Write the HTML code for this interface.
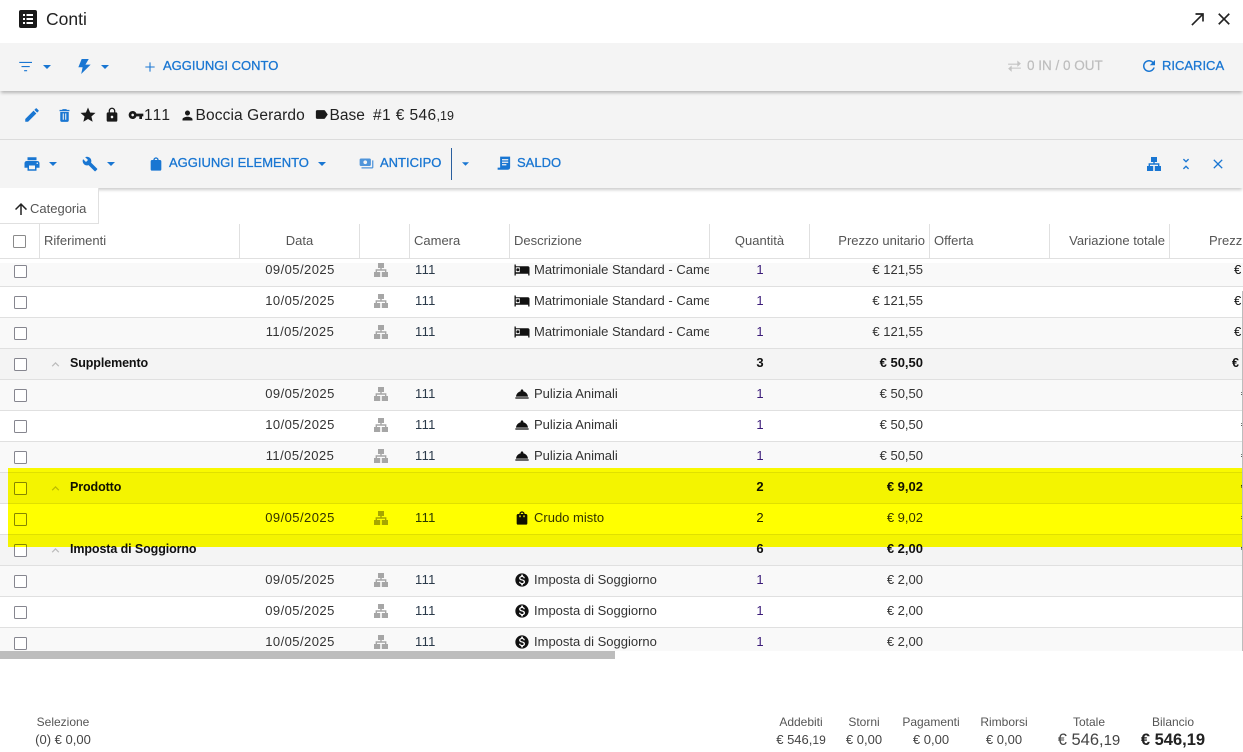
<!DOCTYPE html>
<html lang="it"><head><meta charset="utf-8"><title>Conti</title>
<style>
html,body{margin:0;padding:0;width:1243px;height:752px;overflow:hidden;background:#fff}
body{position:relative;font-family:"Liberation Sans",sans-serif;font-size:13px;color:#333}
.a,.r>*,.h{position:absolute;white-space:nowrap}
svg.i{position:absolute;fill:currentColor}
.bar{position:absolute;left:0;width:1243px;background:#f4f4f4}
.b{color:#1976d2;font-size:13px;-webkit-text-stroke:.3px #1976d2;line-height:16px;top:0}
.h{top:233px;line-height:16px;color:#555;font-size:13px}
.vl{position:absolute;top:224px;height:34px;width:1px;background:#e0e0e0}
#rows{position:absolute;left:0;top:259px;width:1243px;height:392px;overflow:hidden}
.r{position:absolute;left:0;width:1243px;height:30px;border-bottom:1px solid #e0e0e0;line-height:28px;background:#fff}
.o{background:#f9f9f9}
.g{background:#f4f4f4;font-weight:bold;color:#111;font-size:12.5px}
.c{left:14px;top:9px;width:13px;height:13px;box-sizing:border-box;border:1.5px solid #86868f;border-radius:1.5px;background:#fff}
.d{left:240px;width:120px;text-align:center;letter-spacing:.45px}
.m{left:374px;top:7px;width:14px;height:14px;color:#a6a6a6}
.n{left:415px;color:#2b3a4a;letter-spacing:.3px}
.ic{left:514px;top:6px;width:16px;height:16px;color:#111}
.t{left:534px;width:175px;overflow:hidden}
.q{left:710px;width:100px;text-align:center;color:#3a1a78}
.g .q{color:#111;font-size:13px}
.p{left:810px;width:113px;text-align:right}
.g .p{font-size:13px}
.e{left:1234px;color:#111}
.x{left:48px;top:8px;width:15px;height:15px;color:#bbb}
.l{left:70px;letter-spacing:-.1px}
.f{position:absolute;text-align:center;width:100px;color:#555;font-size:12px;line-height:14px}
.f b{display:block;font-weight:normal;font-size:13px;line-height:18px;margin-top:2px;color:#444}
.f small{font-size:12px}
</style></head><body>
<svg width="0" height="0" style="position:absolute"><defs>
<symbol id="sm" viewBox="0 0 14 14"><path d="M4 0h6v5H7.700v1.300h4.700V9H14v5H7.800V9h3.200V7.700H3V9h3.200v5H0V9h1.600V6.300h4.700V5H4z"/></symbol>
<symbol id="bed" viewBox="0 0 16 16"><path fill-rule="evenodd" d="M.5 2.500h1.300v1.800H14c.8 0 1.500.7 1.500 1.500v7.700h-1.300v-1.700H1.800v1.700H.5zM1.800 5.300v4.900h4V5.300zM3.800 6.200a1.500 1.500 0 1 1 0 3 1.500 1.500 0 0 1 0-3z"/></symbol>
<symbol id="rs" viewBox="0 0 24 24"><path d="M2 17h20v2H2zm11.840-9.210c.1-.24.16-.51.16-.79 0-1.100-.9-2-2-2s-2 .9-2 2c0 .28.06.55.16.79C6.250 8.600 3.270 11.930 3 16h18c-.27-4.070-3.250-7.400-7.160-8.210z"/></symbol>
<symbol id="bag" viewBox="0 0 24 24"><path d="M18 6h-2c0-2.210-1.790-4-4-4S8 3.790 8 6H6c-1.100 0-2 .9-2 2v12c0 1.100.9 2 2 2h12c1.100 0 2-.9 2-2V8c0-1.100-.9-2-2-2zm-8 4c0 .55-.45 1-1 1s-1-.45-1-1V8h2v2zm2-6c1.100 0 2 .9 2 2h-4c0-1.100.9-2 2-2zm4 6c0 .55-.45 1-1 1s-1-.45-1-1V8h2v2z"/></symbol>
<symbol id="pd" viewBox="0 0 24 24"><path d="M12 2C6.480 2 2 6.480 2 12s4.480 10 10 10 10-4.480 10-10S17.520 2 12 2zm1.410 16.090V20h-2.670v-1.930c-1.710-.36-3.160-1.460-3.270-3.400h1.960c.1 1.050.82 1.870 2.650 1.870 1.960 0 2.400-.98 2.400-1.590 0-.83-.44-1.610-2.670-2.140-2.480-.6-4.180-1.620-4.180-3.670 0-1.720 1.390-2.840 3.110-3.210V4h2.670v1.950c1.860.45 2.790 1.860 2.850 3.390H14.300c-.05-1.110-.64-1.870-2.220-1.870-1.500 0-2.400.68-2.400 1.640 0 .84.65 1.390 2.670 1.910s4.180 1.390 4.180 3.910c-.01 1.830-1.380 2.830-3.120 3.160z"/></symbol>
<symbol id="up" viewBox="0 0 24 24"><path d="M12 8l-6 6 1.410 1.410L12 10.830l4.590 4.580L18 14z"/></symbol>
<symbol id="dn" viewBox="0 0 10 5"><path d="M0 0h10L5 5z"/></symbol>
<symbol id="cl" viewBox="0 0 24 24"><path d="M19 6.410L17.590 5 12 10.590 6.410 5 5 6.410 10.590 12 5 17.590 6.410 19 12 13.410 17.590 19 19 17.590 13.410 12z"/></symbol>
</defs></svg>

<svg class="i" style="left:18px;top:9px;width:20px;height:20px;color:#1a1a1a" viewBox="0 0 20 20"><path fill-rule="evenodd" d="M3 1h14a2 2 0 0 1 2 2v14a2 2 0 0 1-2 2H3a2 2 0 0 1-2-2V3a2 2 0 0 1 2-2zM5 5v2h2V5zM8.500 5v2H15V5zM5 9v2h2V9zM8.500 9v2H15V9zM5 13v2h2v-2zM8.500 13v2H15v-2z"/></svg>
<div class="a" style="left:46px;top:8px;font-size:17.5px;line-height:22px;color:#222">Conti</div>
<svg class="i" style="left:1188px;top:9px;width:20px;height:20px;color:#222" viewBox="0 0 24 24"><path d="M9 5v2h6.590L4 18.590 5.410 20 17 8.410V15h2V5z"/></svg>
<svg class="i" style="left:1214px;top:9px;width:20px;height:20px;color:#222"><use href="#cl"/></svg>

<div class="bar" style="top:43px;height:48px;box-shadow:0 3px 3px -1px rgba(0,0,0,.25);z-index:3"></div>
<div style="position:absolute;left:0;top:0;width:1243px;height:190px;z-index:4;color:#1976d2">
<svg class="i" style="left:17px;top:57px;width:18px;height:18px" viewBox="0 0 24 24"><path d="M3 6.500V8h17V6.500zM6 12v1.500h11V12zM9.500 17.500V19h4v-1.500z"/></svg>
<svg class="i" style="left:43px;top:65px;width:8px;height:4px"><use href="#dn"/></svg>
<svg class="i" style="left:76px;top:59px;width:17px;height:15px" viewBox="3 2 18 20" preserveAspectRatio="none"><path d="M9 2L5.500 13H10l-1.500 9L18.500 9.500H13L16.500 2z"/></svg>
<svg class="i" style="left:101px;top:65px;width:8px;height:4px"><use href="#dn"/></svg>
<svg class="i" style="left:142px;top:59px;width:16px;height:16px" viewBox="0 0 24 24"><path d="M19 12.800h-6.200V19h-1.600v-6.200H5v-1.600h6.200V5h1.600v6.200H19z"/></svg>
<div class="a b" style="left:163px;top:58px">AGGIUNGI CONTO</div>
<svg class="i" style="left:1006px;top:58px;width:17px;height:17px;color:#c4c4c4" viewBox="0 0 24 24"><path d="M16 4l5 4.500-5 4.500v-3H3V8.500h13V4zM8 11v3h13v1.500H8V20l-5-4.500L8 11z" transform="translate(0 -.5)"/></svg>
<div class="a" style="left:1027px;top:58px;color:#bdbdbd;font-size:13.5px;line-height:16px;-webkit-text-stroke:.2px #bdbdbd">0 IN / 0 OUT</div>
<svg class="i" style="left:1140px;top:57px;width:18px;height:18px" viewBox="0 0 24 24"><path d="M17.650 6.350C16.200 4.900 14.210 4 12 4c-4.420 0-7.990 3.580-7.990 8s3.570 8 7.990 8c3.730 0 6.840-2.550 7.730-6h-2.080c-.82 2.330-3.040 4-5.650 4-3.310 0-6-2.690-6-6s2.690-6 6-6c1.660 0 3.140.69 4.220 1.780L13 11h7V4l-2.350 2.350z"/></svg>
<div class="a b" style="left:1162px;top:58px">RICARICA</div>
</div>

<div class="bar" style="top:91px;height:48px"></div>
<div class="bar" style="top:139px;height:49px;border-top:1px solid #dcdcdc;box-sizing:border-box;box-shadow:0 3px 3px -1px rgba(0,0,0,.2)"></div>

<svg class="i" style="left:23px;top:106px;width:18px;height:18px;color:#1976d2" viewBox="0 0 24 24"><path d="M3 17.250V21h3.750L17.810 9.940l-3.750-3.750L3 17.250zM20.710 7.040c.39-.39.39-1.020 0-1.410l-2.340-2.340c-.39-.39-1.020-.39-1.410 0l-1.830 1.830 3.750 3.750 1.830-1.830z"/></svg>
<svg class="i" style="left:56px;top:107px;width:17px;height:17px;color:#1976d2" viewBox="0 0 24 24"><path fill-rule="evenodd" d="M6 19c0 1.100.9 2 2 2h8c1.100 0 2-.9 2-2V7H6v12zM9.500 9v9H11V9zM13 9v9h1.500V9zM19 4h-3.500l-1-1h-5l-1 1H5v2h14V4z"/></svg>
<svg class="i" style="left:79px;top:106px;width:18px;height:18px;color:#1a1a1a" viewBox="0 0 24 24"><path d="M12 17.270L18.180 21l-1.640-7.030L22 9.240l-7.190-.61L12 2 9.190 8.630 2 9.240l5.460 4.730L5.820 21z"/></svg>
<svg class="i" style="left:104px;top:107px;width:16px;height:16px;color:#1a1a1a" viewBox="0 0 24 24"><path d="M18 8h-1V6c0-2.760-2.240-5-5-5S7 3.240 7 6v2H6c-1.100 0-2 .9-2 2v10c0 1.100.9 2 2 2h12c1.100 0 2-.9 2-2V10c0-1.100-.9-2-2-2zm-6 9c-1.100 0-2-.9-2-2s.9-2 2-2 2 .9 2 2-.9 2-2 2zm3.100-9H8.900V6c0-1.710 1.390-3.100 3.100-3.100 1.710 0 3.100 1.390 3.100 3.100v2z"/></svg>
<svg class="i" style="left:128px;top:107px;width:16px;height:16px;color:#1a1a1a" viewBox="0 0 24 24"><path d="M12.650 10C11.830 7.670 9.610 6 7 6c-3.310 0-6 2.690-6 6s2.690 6 6 6c2.610 0 4.830-1.670 5.650-4H17v4h4v-4h2v-4H12.650zM7 14c-1.100 0-2-.9-2-2s.9-2 2-2 2 .9 2 2-.9 2-2 2z"/></svg>
<div class="a" style="left:144px;top:107px;font-size:15.5px;line-height:18px;color:#222;letter-spacing:1.2px">111</div>
<svg class="i" style="left:180px;top:108px;width:15px;height:15px;color:#1a1a1a" viewBox="0 0 24 24"><path d="M12 12c2.210 0 4-1.790 4-4s-1.790-4-4-4-4 1.790-4 4 1.790 4 4 4zm0 2c-2.670 0-8 1.340-8 4v2h16v-2c0-2.660-5.330-4-8-4z"/></svg>
<div class="a" style="left:195.5px;top:107px;font-size:15.5px;line-height:18px;color:#222;letter-spacing:.12px">Boccia Gerardo</div>
<svg class="i" style="left:314px;top:107px;width:15px;height:15px;color:#1a1a1a" viewBox="0 0 24 24"><path d="M17.630 5.840C17.270 5.330 16.670 5 16 5L5 5.010C3.900 5.010 3 5.900 3 7v10c0 1.100.9 1.990 2 1.990L16 19c.67 0 1.270-.33 1.630-.84L22 12l-4.370-6.160z"/></svg>
<div class="a" style="left:329.5px;top:107px;font-size:15.5px;line-height:18px;color:#222;letter-spacing:0">Base</div>
<div class="a" style="left:373px;top:107px;font-size:15.5px;line-height:18px;color:#222;letter-spacing:.4px">#1 € 546<span style="font-size:12.5px;letter-spacing:0">,19</span></div>

<div style="position:absolute;left:0;top:0;color:#1976d2;z-index:2">
<svg class="i" style="left:23px;top:155px;width:18px;height:18px" viewBox="0 0 24 24"><path d="M19 8H5c-1.660 0-3 1.340-3 3v6h4v4h12v-4h4v-6c0-1.660-1.340-3-3-3zm-3 11H8v-5h8v5zm3-7c-.55 0-1-.45-1-1s.45-1 1-1 1 .45 1 1-.45 1-1 1zm-1-9H6v4h12V3z"/></svg>
<svg class="i" style="left:49px;top:162px;width:8px;height:4px"><use href="#dn"/></svg>
<svg class="i" style="left:82px;top:156px;width:16px;height:16px" viewBox="0 0 24 24"><path d="M22.700 19l-9.100-9.100c.9-2.300.4-5-1.500-6.900-2-2-5-2.400-7.400-1.300L9 6 6 9 1.600 4.700C.4 7.100.9 10.100 2.900 12.100c1.900 1.900 4.600 2.400 6.900 1.500l9.100 9.100c.4.4 1 .4 1.400 0l2.300-2.300c.5-.4.5-1.100.1-1.400z"/></svg>
<svg class="i" style="left:107px;top:162px;width:8px;height:4px"><use href="#dn"/></svg>
<svg class="i" style="left:148px;top:156px;width:16px;height:16px" viewBox="0 0 24 24"><path d="M18 6h-2c0-2.210-1.790-4-4-4S8 3.790 8 6H6c-1.100 0-2 .9-2 2v12c0 1.100.9 2 2 2h12c1.100 0 2-.9 2-2V8c0-1.100-.9-2-2-2zm-6-2c1.100 0 2 .9 2 2h-4c0-1.100.9-2 2-2z"/></svg>
<div class="a b" style="left:169px;top:155px">AGGIUNGI ELEMENTO</div>
<svg class="i" style="left:318px;top:162px;width:8px;height:4px"><use href="#dn"/></svg>
<svg class="i" style="left:359px;top:156px;width:15px;height:15px;opacity:.75" viewBox="0 0 24 24"><path d="M19 14V6c0-1.100-.9-2-2-2H3c-1.100 0-2 .9-2 2v8c0 1.100.9 2 2 2h14c1.100 0 2-.9 2-2zm-9-1c-1.660 0-3-1.340-3-3s1.340-3 3-3 3 1.340 3 3-1.340 3-3 3zm13-6v11c0 1.100-.9 2-2 2H4v-2h17V7h2z"/></svg>
<div class="a b" style="left:380px;top:155px">ANTICIPO</div>
<div class="a" style="left:451px;top:148px;width:1px;height:32px;background:#2a5f9e"></div>
<svg class="i" style="left:462px;top:162px;width:7px;height:4px"><use href="#dn"/></svg>
<svg class="i" style="left:497px;top:156px;width:15px;height:15px" viewBox="0 0 24 24"><path fill-rule="evenodd" d="M5 1h16v17c0 2.500-1.500 4-4 4H1v-3.500h4zM8 5v2h10V5zM8 9v2h10V9zM8 13v2h7v-2z"/></svg>
<div class="a b" style="left:517px;top:155px">SALDO</div>
<svg class="i" style="left:1147px;top:157px;width:14px;height:14px"><use href="#sm"/></svg>
<svg class="i" style="left:1178px;top:156px;width:16px;height:16px" viewBox="0 0 24 24"><path d="M7.410 18.590L8.830 20 12 16.830 15.170 20l1.410-1.410L12 14l-4.590 4.590zm9.180-13.180L15.170 4 12 7.170 8.830 4 7.410 5.410 12 10l4.590-4.590z"/></svg>
<svg class="i" style="left:1210px;top:156px;width:16px;height:16px"><use href="#cl"/></svg>
</div>

<div class="a" style="left:0;top:188px;width:98px;height:35px;border-right:1px solid #e0e0e0;border-bottom:1px solid #e0e0e0;background:#fff"></div>
<svg class="i" style="left:12px;top:200px;width:18px;height:18px;color:#222" viewBox="0 0 24 24"><path d="M4 12l1.410 1.410L11 7.830V20h2V7.830l5.580 5.590L20 12l-8-8-8 8z"/></svg>
<div class="a" style="left:30px;top:201px;line-height:16px;color:#555">Categoria</div>

<div class="a" style="left:0;top:258px;width:1243px;height:1px;background:#e0e0e0"></div>
<div class="vl" style="left:39px"></div><div class="vl" style="left:239px"></div><div class="vl" style="left:359px"></div><div class="vl" style="left:409px"></div><div class="vl" style="left:509px"></div><div class="vl" style="left:709px"></div><div class="vl" style="left:809px"></div><div class="vl" style="left:929px"></div><div class="vl" style="left:1049px"></div><div class="vl" style="left:1169px"></div>
<div class="a" style="left:13px;top:235px;width:13px;height:13px;box-sizing:border-box;border:1.5px solid #8a8a8a;border-radius:1.5px"></div>
<div class="h" style="left:44px">Riferimenti</div>
<div class="h" style="left:240px;width:119px;text-align:center">Data</div>
<div class="h" style="left:414px">Camera</div>
<div class="h" style="left:514px">Descrizione</div>
<div class="h" style="left:710px;width:99px;text-align:center">Quantità</div>
<div class="h" style="left:810px;width:115px;text-align:right">Prezzo unitario</div>
<div class="h" style="left:934px">Offerta</div>
<div class="h" style="left:1050px;width:115px;text-align:right">Variazione totale</div>
<div class="h" style="left:1209px">Prezz</div>

<div id="rows">
<div class="r o" style="top:-3px"><i class="c"></i><span class="d">09/05/2025</span><svg class="i m"><use href="#sm"/></svg><span class="n">111</span><svg class="i ic"><use href="#bed"/></svg><span class="t">Matrimoniale Standard - Camera</span><span class="q">1</span><span class="p">€ 121,55</span><span class="e">€</span></div>
<div class="r" style="top:28px"><i class="c"></i><span class="d">10/05/2025</span><svg class="i m"><use href="#sm"/></svg><span class="n">111</span><svg class="i ic"><use href="#bed"/></svg><span class="t">Matrimoniale Standard - Camera</span><span class="q">1</span><span class="p">€ 121,55</span><span class="e">€</span></div>
<div class="r o" style="top:59px"><i class="c"></i><span class="d">11/05/2025</span><svg class="i m"><use href="#sm"/></svg><span class="n">111</span><svg class="i ic"><use href="#bed"/></svg><span class="t">Matrimoniale Standard - Camera</span><span class="q">1</span><span class="p">€ 121,55</span><span class="e">€</span></div>
<div class="r g" style="top:90px"><i class="c"></i><svg class="i x"><use href="#up"/></svg><span class="l">Supplemento</span><span class="q">3</span><span class="p">€ 50,50</span><span class="e" style="left:1232px">€</span></div>
<div class="r o" style="top:121px"><i class="c"></i><span class="d">09/05/2025</span><svg class="i m"><use href="#sm"/></svg><span class="n">111</span><svg class="i ic"><use href="#rs"/></svg><span class="t">Pulizia Animali</span><span class="q">1</span><span class="p">€ 50,50</span><span class="e" style="left:1241px">€</span></div>
<div class="r" style="top:152px"><i class="c"></i><span class="d">10/05/2025</span><svg class="i m"><use href="#sm"/></svg><span class="n">111</span><svg class="i ic"><use href="#rs"/></svg><span class="t">Pulizia Animali</span><span class="q">1</span><span class="p">€ 50,50</span><span class="e" style="left:1241px">€</span></div>
<div class="r o" style="top:183px"><i class="c"></i><span class="d">11/05/2025</span><svg class="i m"><use href="#sm"/></svg><span class="n">111</span><svg class="i ic"><use href="#rs"/></svg><span class="t">Pulizia Animali</span><span class="q">1</span><span class="p">€ 50,50</span><span class="e" style="left:1241px">€</span></div>
<div class="r g" style="top:214px"><i class="c"></i><svg class="i x"><use href="#up"/></svg><span class="l">Prodotto</span><span class="q">2</span><span class="p">€ 9,02</span><span class="e" style="left:1241px">€</span></div>
<div class="r" style="top:245px"><i class="c"></i><span class="d">09/05/2025</span><svg class="i m"><use href="#sm"/></svg><span class="n">111</span><svg class="i ic"><use href="#bag"/></svg><span class="t">Crudo misto</span><span class="q" style="color:#222">2</span><span class="p">€ 9,02</span><span class="e" style="left:1241px">€</span></div>
<div class="r g" style="top:276px"><i class="c"></i><svg class="i x"><use href="#up"/></svg><span class="l">Imposta di Soggiorno</span><span class="q">6</span><span class="p">€ 2,00</span><span class="e" style="left:1241px">€</span></div>
<div class="r o" style="top:307px"><i class="c"></i><span class="d">09/05/2025</span><svg class="i m"><use href="#sm"/></svg><span class="n">111</span><svg class="i ic"><use href="#pd"/></svg><span class="t">Imposta di Soggiorno</span><span class="q">1</span><span class="p">€ 2,00</span></div>
<div class="r" style="top:338px"><i class="c"></i><span class="d">09/05/2025</span><svg class="i m"><use href="#sm"/></svg><span class="n">111</span><svg class="i ic"><use href="#pd"/></svg><span class="t">Imposta di Soggiorno</span><span class="q">1</span><span class="p">€ 2,00</span></div>
<div class="r o" style="top:369px"><i class="c"></i><span class="d">10/05/2025</span><svg class="i m"><use href="#sm"/></svg><span class="n">111</span><svg class="i ic"><use href="#pd"/></svg><span class="t">Imposta di Soggiorno</span><span class="q">1</span><span class="p">€ 2,00</span></div>
</div>
<div class="a" style="left:0;top:259px;width:1243px;height:4px;background:#fff"></div>
<div class="a" style="left:0;top:651px;width:615px;height:8px;background:#bdbdbd"></div>
<div class="a" style="left:1242px;top:291px;width:1px;height:360px;background:#bdbdbd"></div>
<div class="a" style="left:8px;top:468px;width:1234px;height:79px;background:#ff0;mix-blend-mode:multiply"></div>

<div class="f" style="left:13px;top:715px">Selezione<b>(0) € 0,00</b></div>
<div class="f" style="left:751px;top:715px">Addebiti<b>€ 546,<small>19</small></b></div>
<div class="f" style="left:814px;top:715px">Storni<b>€ 0,00</b></div>
<div class="f" style="left:881px;top:715px">Pagamenti<b>€ 0,00</b></div>
<div class="f" style="left:954px;top:715px">Rimborsi<b>€ 0,00</b></div>
<div class="f" style="left:1039px;top:715px">Totale<b style="font-size:16.5px">€ 546,<small style="font-size:15px">19</small></b></div>
<div class="f" style="left:1123px;top:715px">Bilancio<b style="font-size:16.5px;font-weight:bold;color:#222">€ 546,19</b></div>
</body></html>
